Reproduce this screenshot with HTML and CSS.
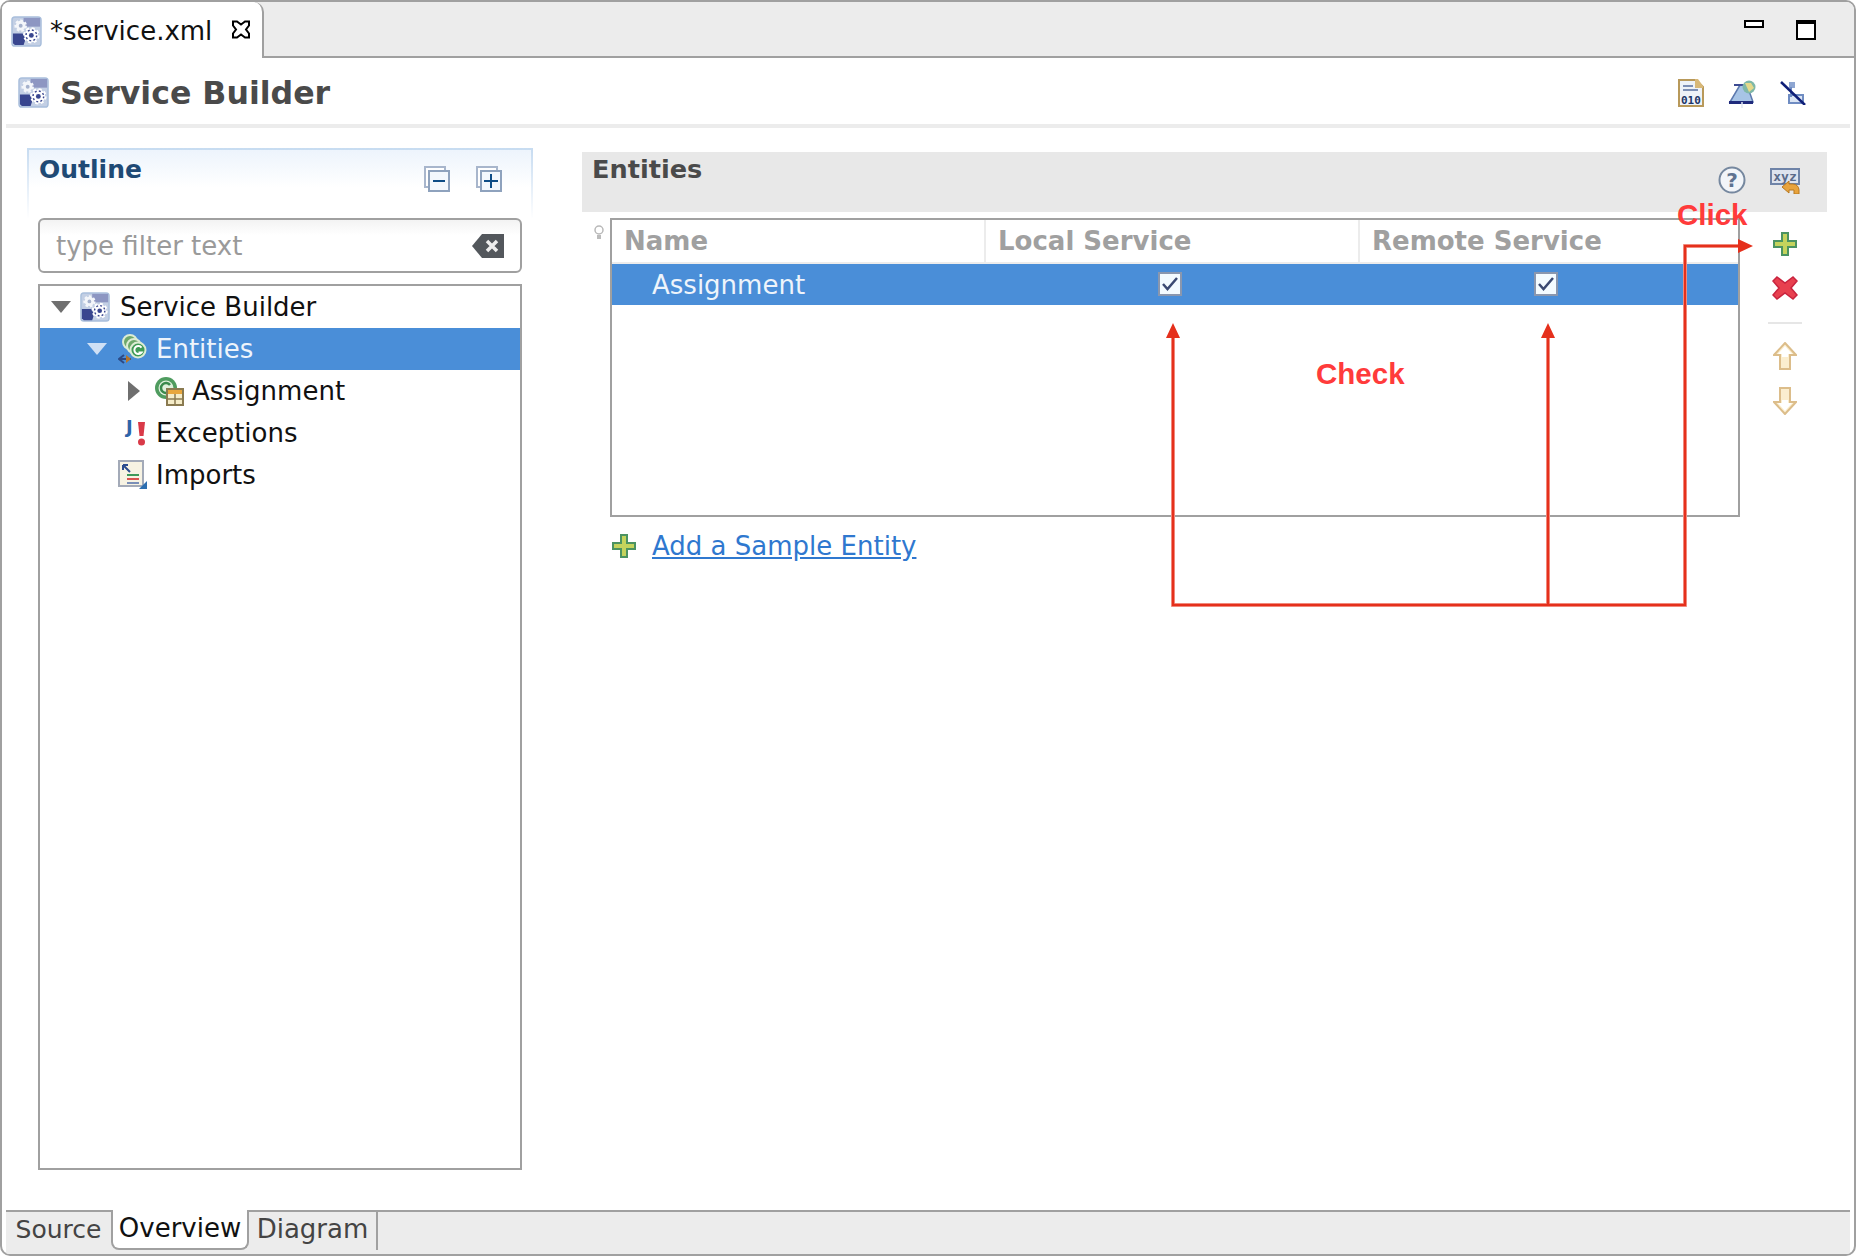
FILE: index.html
```html
<!DOCTYPE html>
<html lang="en">

<head>
    <meta charset="UTF-8">
    <title>service.xml</title>
    <link rel="stylesheet" href="styles.css">
</head>

<body>
    <svg class="defs" width="0" height="0">
        <defs>
            <symbol id="gears" viewBox="0 0 32 32">
                <rect x="1" y="1" width="30" height="30" rx="3" fill="#c3cfe4" stroke="#a9bfdc" stroke-width="1.500" />
                <rect x="13" y="2" width="17" height="9" fill="#8d96c2" />
                <path d="M2 18h10l3 6-2 6H4l-2-2z" fill="#39468f" />
                <circle cx="10" cy="10" r="5" fill="#f4f6fa" stroke="#f4f6fa" stroke-width="3" stroke-dasharray="2.500 2" />
                <circle cx="10" cy="10" r="2" fill="#a5b1cc" />
                <circle cx="21" cy="20" r="7" fill="#fff" stroke="#fff" stroke-width="3" stroke-dasharray="3 2.500" />
                <circle cx="21" cy="20" r="5.500" fill="none" stroke="#39468f" stroke-width="1.500" stroke-dasharray="2 2.300" />
                <circle cx="21" cy="20" r="2.500" fill="#39468f" />
            </symbol>
            <symbol id="plus" viewBox="0 0 24 24">
                <path d="M8 0h8v8h8v8h-8v8H8v-8H0V8h8z" fill="#4b9361" />
                <path d="M10 2h4v8h8v4h-8v8h-4v-8H2v-4h8z" fill="#c4d35c" />
            </symbol>
            <symbol id="arrow" viewBox="0 0 24 28">
                <path d="M12 1l11 12h-6v14H7V13H1z" fill="#fbeecf" stroke="#dcbd8a" stroke-width="2" />
                <path d="M12 4l7 8h-4v3H9v-3H5z" fill="#fff" />
            </symbol>
            <symbol id="check" viewBox="0 0 24 24">
                <rect x="1" y="1" width="22" height="22" fill="#f3fbff" stroke="#8a97ae" stroke-width="2" />
                <path d="M5 12l4.500 5L19 6" fill="none" stroke="#3b4a72" stroke-width="2.500" />
            </symbol>
        </defs>
    </svg>

    <div class="window">
        <div class="tabbar">
            <div class="tab">
                <svg class="icon-31"><use href="#gears" /></svg>
                <span>*service.xml</span>
                <svg class="tab-close" viewBox="0 0 20 20">
                    <path d="M2 2h4l4 3 4-3h4v4l-3 4 3 4v4h-4l-4-3-4 3H2v-4l3-4-3-4z" fill="#fff" stroke="#000" stroke-width="2" />
                </svg>
            </div>
            <div class="win-btns">
                <span class="btn-min"></span>
                <span class="btn-max"></span>
            </div>
        </div>

        <div class="form-head">
            <svg class="icon-31"><use href="#gears" /></svg>
            <h1>Service Builder</h1>
            <div class="head-tools">
                <svg class="tool-bin" viewBox="0 0 26 28">
                    <path d="M1 1h17l7 7v19H1z" fill="#eef2f8" stroke="#b8995a" stroke-width="2" />
                    <path d="M17 0h3l5 7v2h-8z" fill="#d8b878" />
                    <path d="M5 7h10M5 11h15" stroke="#7d8fb5" stroke-width="2" />
                    <text x="3" y="25" class="bin-text">010</text>
                </svg>
                <svg class="tool-deploy" viewBox="0 0 28 30">
                    <path d="M2 24L12 7h7l6 17z" fill="#a7c4e6" stroke="#5c79ae" stroke-width="1.500" />
                    <rect x="1" y="23" width="24" height="3" fill="#1f2a7c" />
                    <path d="M6 7h14" stroke="#3c4a92" stroke-width="2" />
                    <circle cx="21" cy="9" r="6.500" fill="#7fb8a8" />
                    <path d="M17 5l6 0 3 5-5 4z" fill="#e5d98a" />
                    <path d="M14 24v6" stroke="#dfe6f2" stroke-width="1.500" />
                </svg>
                <svg class="tool-nolink" viewBox="0 0 26 24">
                    <rect x="9" y="1" width="6" height="6" fill="#8ea6d2" />
                    <rect x="9" y="14" width="14" height="8" fill="#dbe5f4" stroke="#6f8cc2" stroke-width="2" />
                    <path d="M11 6v10" stroke="#6f8cc2" stroke-width="2" />
                    <path d="M1 1l24 23" stroke="#0f1f78" stroke-width="2.500" />
                </svg>
            </div>
        </div>

        <div class="form-body">
            <section class="outline">
                <div class="outline-head">
                    <h2>Outline</h2>
                    <svg class="tool-tree" viewBox="0 0 26 26">
                        <rect x="1" y="1" width="20" height="20" fill="#fff" stroke="#a8b6cc" stroke-width="2" />
                        <rect x="5" y="5" width="20" height="20" fill="#f3f8fd" stroke="#8ea2bd" stroke-width="2" />
                        <path d="M9 15h12" stroke="#0e4d86" stroke-width="2" />
                    </svg>
                    <svg class="tool-tree" viewBox="0 0 26 26">
                        <rect x="1" y="1" width="20" height="20" fill="#fff" stroke="#a8b6cc" stroke-width="2" />
                        <rect x="5" y="5" width="20" height="20" fill="#f3f8fd" stroke="#8ea2bd" stroke-width="2" />
                        <path d="M8 15h14M15 8v14" stroke="#0e4d86" stroke-width="2" />
                    </svg>
                </div>
                <div class="filter">
                    <span>type filter text</span>
                    <svg class="filter-clear" viewBox="0 0 32 24">
                        <path d="M10 0h22v24H10L0 12z" fill="#53575c" />
                        <path d="M15 7l10 10M25 7L15 17" stroke="#eee" stroke-width="3.500" />
                    </svg>
                </div>
                <ul class="tree">
                    <li class="node">
                        <span class="exp exp-open"></span>
                        <svg class="icon-30"><use href="#gears" /></svg>
                        <span>Service Builder</span>
                    </li>
                    <li class="node node-sel lvl-1">
                        <span class="exp exp-open"></span>
                        <svg class="icon-30" viewBox="0 0 30 30">
                            <circle cx="12" cy="8" r="7" fill="#6ea86c" stroke="#dcecd4" stroke-width="2" />
                            <circle cx="16" cy="12" r="7" fill="#6ea86c" stroke="#dcecd4" stroke-width="2" />
                            <circle cx="20" cy="16" r="7.500" fill="#3f9a55" stroke="#dcecd4" stroke-width="2" />
                            <path d="M23.500 13.500a4 4 0 1 0 0 5h-3" fill="none" stroke="#fff" stroke-width="2" />
                            <path d="M1 25h12" stroke="#2c4a86" stroke-width="2" />
                            <path d="M8 21l5 4-5 4z" fill="#b5752a" />
                            <path d="M6 21l-5 4 5 4" fill="none" stroke="#2c4a86" stroke-width="2" />
                        </svg>
                        <span>Entities</span>
                    </li>
                    <li class="node lvl-2">
                        <span class="exp exp-closed"></span>
                        <svg class="icon-30" viewBox="0 0 30 30">
                            <circle cx="12" cy="12" r="11" fill="#4f9c5f" />
                            <circle cx="12" cy="12" r="7.500" fill="#dff0dc" />
                            <path d="M16 9a5 5 0 1 0 0 6h-4" fill="none" stroke="#3a8a4c" stroke-width="2.500" />
                            <rect x="13" y="13" width="16" height="16" fill="#f5ecc8" stroke="#8a7a50" stroke-width="2" />
                            <rect x="14" y="14" width="14" height="4" fill="#e8a63c" />
                            <path d="M21 18v10M14 23h14" stroke="#8a7a50" stroke-width="1.500" />
                        </svg>
                        <span>Assignment</span>
                    </li>
                    <li class="node lvl-3">
                        <svg class="icon-exc" viewBox="0 -4 26 32">
                            <text x="4" y="14" class="j-text">J</text>
                            <path d="M16 3h7l-1.500 14h-4z" fill="#d93a48" />
                            <circle cx="19.500" cy="23" r="3.500" fill="#d93a48" />
                        </svg>
                        <span>Exceptions</span>
                    </li>
                    <li class="node lvl-3">
                        <svg class="icon-30" viewBox="0 0 30 30">
                            <rect x="1" y="1" width="24" height="25" fill="#f7f3e3" stroke="#a3aab8" stroke-width="2" />
                            <path d="M5 5l7 7M5 5h5M5 5v5" fill="none" stroke="#2d4d8f" stroke-width="2" />
                            <path d="M9 15h12" stroke="#3e9a5a" stroke-width="2" />
                            <path d="M9 19h12" stroke="#d9534f" stroke-width="2" />
                            <path d="M9 23h12" stroke="#7a8fb8" stroke-width="2" />
                            <path d="M29 21v8h-8z" fill="#2d6fb0" />
                        </svg>
                        <span>Imports</span>
                    </li>
                </ul>
            </section>

            <section class="entities">
                <div class="entities-head">
                    <h2>Entities</h2>
                    <svg class="tool-help" viewBox="0 0 28 28">
                        <circle cx="14" cy="14" r="12.500" fill="#f2f5f9" stroke="#76889f" stroke-width="2" />
                        <text x="14" y="21" class="help-text">?</text>
                    </svg>
                    <svg class="tool-xyz" viewBox="0 0 30 26">
                        <rect x="1" y="1" width="28" height="15" fill="#dde3ee" stroke="#6f84a8" stroke-width="2" />
                        <text x="15" y="13" class="xyz-text">xyz</text>
                        <path d="M12 19l7-6v3h4a6 6 0 0 1 6 6v4h-5v-4h-5v3z" fill="#e8a33c" stroke="#b9781e" />
                    </svg>
                </div>
                <div class="entities-main">
                    <svg class="bulb" viewBox="0 0 10 15">
                        <circle cx="5" cy="5" r="4" fill="#fff" stroke="#b8b8b8" stroke-width="1.500" />
                        <path d="M3 10h4v4H3z" fill="#bbb" />
                    </svg>
                    <div class="table-box">
                        <table class="grid">
                            <thead>
                                <tr>
                                    <th>Name</th>
                                    <th>Local Service</th>
                                    <th>Remote Service</th>
                                </tr>
                            </thead>
                            <tbody>
                                <tr class="row-sel">
                                    <td class="cell-name">Assignment</td>
                                    <td class="cell-check"><svg class="check"><use href="#check" /></svg></td>
                                    <td class="cell-check cell-last"><svg class="check"><use href="#check" /></svg></td>
                                </tr>
                            </tbody>
                        </table>
                    </div>
                    <div class="side-tools">
                        <svg class="side-plus"><use href="#plus" /></svg>
                        <svg class="side-del" viewBox="0 0 26 24">
                            <path d="M5 1l8 6 8-6 4 4-6 7 6 7-4 4-8-6-8 6-4-4 6-7-6-7z" fill="#e8404f" stroke="#c9233e" stroke-width="1.500" />
                        </svg>
                        <div class="side-sep"></div>
                        <svg class="side-arrow"><use href="#arrow" /></svg>
                        <svg class="side-arrow side-down"><use href="#arrow" /></svg>
                    </div>
                </div>
                <div class="add-link">
                    <svg class="add-plus"><use href="#plus" /></svg>
                    <a href="#">Add a Sample Entity</a>
                </div>
            </section>
        </div>

        <div class="page-tabs">
            <div class="page-tab page-tab-source">Source</div>
            <div class="page-tab page-tab-on">Overview</div>
            <div class="page-tab page-tab-last">Diagram</div>
        </div>

        <!-- red notes drawn on top of the screenshot -->
        <svg class="notes" width="1856" height="1256" viewBox="0 0 1856 1256">
            <path class="note-halo" d="M1173 335V605H1685V246H1740M1548 335V605" />
            <path class="note-line" d="M1173 335V605H1685V246H1740M1548 335V605" />
            <path class="note-head" d="M1173 323l7 15h-14z" />
            <path class="note-head" d="M1548 323l7 15h-14z" />
            <path class="note-head" d="M1753 246l-15-7v14z" />
            <text x="1677" y="225" class="note-text">Click</text>
            <text x="1316" y="384" class="note-text">Check</text>
        </svg>
    </div>
</body>

</html>
```

FILE: styles.css
```css
* {
    box-sizing: border-box;
    margin: 0;
    padding: 0;
}

body {
    font-family: "DejaVu Sans", sans-serif;
    font-size: 26px;
    color: #111;
    background-color: #fff;
}

.defs {
    position: absolute;
}

svg {
    display: block;
    flex: none;
}

.window {
    position: relative;
    display: flex;
    flex-direction: column;
    width: 1856px;
    height: 1256px;
    overflow: hidden;
    border: 2px solid #a0a0a0;
    border-radius: 10px;
    background-color: #fff;
}

.icon-31 {
    width: 31px;
    height: 31px;
}

.icon-30 {
    width: 30px;
    height: 30px;
}

/* top tab */
.tabbar {
    display: flex;
    justify-content: space-between;
    height: 56px;
    background-color: #ececec;
    border-bottom: 2px solid #a0a0a0;
}

.tab {
    display: flex;
    align-items: center;
    width: 262px;
    height: 56px;
    padding: 2px 0 0 9px;
    gap: 8px;
    background-color: #fff;
    border-right: 2px solid #a0a0a0;
    border-top-right-radius: 10px;
    line-height: 1;
}

.tab-close {
    width: 20px;
    height: 21px;
    margin: -4px 0 0 11px;
}

.win-btns {
    display: flex;
    align-items: flex-start;
    gap: 32px;
    padding: 18px 38px 0 0;
}

.btn-min {
    width: 20px;
    height: 8px;
    border: 2px solid #000;
    background-color: #fff;
}

.btn-max {
    width: 20px;
    height: 20px;
    border: 2px solid #000;
    border-top-width: 4px;
    background-color: #fff;
}

/* form header */
.form-head {
    display: flex;
    align-items: center;
    gap: 11px;
    height: 70px;
    margin: 0 4px;
    padding: 3px 0 0 12px;
    border-bottom: 4px solid #ececec;
}

.form-head h1 {
    font-size: 31.600px;
    font-weight: bold;
    color: #4a4a4a;
}

.head-tools {
    display: flex;
    align-items: center;
    margin-left: auto;
    padding-right: 44px;
    gap: 24px;
}

.tool-bin {
    width: 26px;
    height: 28px;
}

.tool-deploy {
    width: 28px;
    height: 30px;
}

.tool-nolink {
    width: 26px;
    height: 24px;
}

.bin-text {
    font-family: "DejaVu Sans Mono", monospace;
    font-size: 11px;
    font-weight: bold;
    fill: #1c3566;
}

/* body */
.form-body {
    display: flex;
    flex: 1;
    min-height: 0;
    padding: 20px 0 0 25px;
    gap: 49px;
}

.outline {
    width: 506px;
}

.outline-head {
    display: flex;
    align-items: flex-start;
    height: 70px;
    padding: 5px 29px 0 10px;
    border: 2px solid #c7dcf1;
    border-bottom: 0;
    border-image: linear-gradient(#c7dcf1, #eef4fb 70%, #fff) 1;
    background: linear-gradient(#edf4fc, #fff 55%);
}

.outline-head h2 {
    font-size: 25px;
    font-weight: bold;
    line-height: 30px;
    color: #1f4a75;
    margin-right: auto;
}

.tool-tree {
    width: 26px;
    height: 26px;
    margin: 11px 0 0 26px;
}

.filter {
    display: flex;
    align-items: center;
    justify-content: space-between;
    width: 484px;
    height: 55px;
    margin-left: 11px;
    padding: 0 16px 0 16px;
    border: 2px solid #a0a0a0;
    border-radius: 6px;
    color: #9a9a9a;
    background: linear-gradient(#f3f3f3, #fff 30%);
}

.filter-clear {
    width: 32px;
    height: 24px;
}

.tree {
    list-style: none;
    width: 484px;
    height: 886px;
    margin: 11px 0 0 11px;
    border: 2px solid #a0a0a0;
}

.node {
    display: flex;
    align-items: center;
    height: 42px;
    padding-left: 11px;
}

.node-sel {
    color: #eef4fb;
    background-color: #4a8ed8;
}

.exp {
    width: 0;
    height: 0;
    flex: none;
    margin-right: 9px;
}

.exp-open {
    border-left: 10px solid transparent;
    border-right: 10px solid transparent;
    border-top: 12px solid #6f6f6f;
}

.node-sel .exp-open {
    border-top-color: #cfe0f5;
    margin-right: 11px;
}

.exp-closed {
    margin-right: 14px;
    border-top: 10px solid transparent;
    border-bottom: 10px solid transparent;
    border-left: 12px solid #6f6f6f;
}

.node > span:last-child {
    margin-left: 10px;
}

.node-sel > span:last-child {
    margin-left: 8px;
}

.lvl-1 {
    padding-left: 47px;
}

.lvl-2 {
    padding-left: 88px;
}

.lvl-2 > span:last-child,
.lvl-3 > span:last-child {
    margin-left: 8px;
}

.lvl-3 {
    padding-left: 78px;
}

.icon-exc {
    width: 26px;
    height: 32px;
    margin: 0 0 4px 4px;
}

.j-text {
    font-family: "DejaVu Sans", sans-serif;
    font-size: 18px;
    font-weight: bold;
    fill: #2f64a8;
}

/* entities */
.entities {
    width: 1245px;
    margin-top: 4px;
}

.entities-head {
    display: flex;
    align-items: flex-start;
    height: 60px;
    padding: 2px 27px 0 10px;
    background-color: #e8e8e8;
}

.entities-head h2 {
    font-size: 25.600px;
    font-weight: bold;
    line-height: 30px;
    color: #4a4a4a;
    margin-right: auto;
}

.tool-help {
    width: 28px;
    height: 28px;
    margin-top: 12px;
}

.help-text {
    font-size: 20px;
    font-weight: bold;
    text-anchor: middle;
    fill: #5f7391;
}

.tool-xyz {
    width: 30px;
    height: 26px;
    margin: 14px 0 0 24px;
}

.xyz-text {
    font-family: "DejaVu Sans Mono", monospace;
    font-size: 13px;
    font-weight: bold;
    text-anchor: middle;
    fill: #5a6b8a;
}

.entities-main {
    display: flex;
    align-items: flex-start;
    margin-top: 6px;
    padding-left: 12px;
}

.bulb {
    width: 10px;
    height: 15px;
    margin: 7px 6px 0 0;
}

.table-box {
    width: 1130px;
    height: 299px;
    border: 2px solid #a0a0a0;
}

.grid {
    width: 1126px;
    table-layout: fixed;
    border-collapse: collapse;
}

.grid th {
    height: 43px;
    padding-left: 12px;
    text-align: left;
    font-weight: bold;
    color: #a0a0a0;
    border-right: 2px solid #ececec;
    border-bottom: 2px solid #ececec;
}

.grid th:first-child {
    width: 373px;
}

.grid th:nth-child(2) {
    width: 374px;
}

.grid th:last-child {
    border-right: 0;
}

.row-sel {
    height: 42px;
    color: #eef4fb;
    background-color: #4a8ed8;
}

.cell-name {
    padding-left: 40px;
}

.cell-check {
    padding-right: 4px;
}

.cell-last {
    padding-right: 6px;
}

.check {
    width: 24px;
    height: 24px;
    margin: 0 auto 1px;
}

.side-tools {
    display: flex;
    flex-direction: column;
    align-items: center;
    width: 34px;
    margin-left: 28px;
    padding-top: 14px;
}

.side-plus {
    width: 24px;
    height: 24px;
}

.side-del {
    width: 26px;
    height: 24px;
    margin-top: 20px;
}

.side-sep {
    width: 34px;
    height: 2px;
    margin-top: 22px;
    background-color: #e6e6e6;
}

.side-arrow {
    width: 24px;
    height: 28px;
    margin-top: 18px;
}

.side-down {
    margin-top: 17px;
    transform: rotate(180deg);
}

.add-link {
    display: flex;
    align-items: center;
    gap: 16px;
    margin: 14px 0 0 30px;
}

.add-plus {
    width: 24px;
    height: 24px;
}

.add-link a {
    color: #2f78cf;
}

/* bottom tabs */
.page-tabs {
    display: flex;
    height: 44px;
    margin: 0 4px;
    background-color: #ececec;
    border-top: 2px solid #a0a0a0;
    color: #444;
}

.page-tab {
    display: flex;
    align-items: center;
    justify-content: center;
    height: 38px;
    padding-bottom: 4px;
}

.page-tab-source {
    width: 105px;
    font-size: 25px;
}

.page-tab-on {
    width: 138px;
    height: 40px;
    margin-top: -2px;
    padding-bottom: 2px;
    color: #111;
    background-color: #fff;
    border: 2px solid #a0a0a0;
    border-top: 0;
    border-radius: 0 0 8px 8px;
}

.page-tab-last {
    width: 129px;
    border-right: 2px solid #a0a0a0;
}

/* annotations */
.notes {
    position: absolute;
    left: -2px;
    top: -2px;
}

.note-line {
    fill: none;
    stroke: #e5301c;
    stroke-width: 2.500px;
}

.note-halo {
    fill: none;
    stroke: #f4a79d;
    stroke-width: 4px;
}

.note-head {
    fill: #e5301c;
}

.note-text {
    font-family: "Liberation Sans", sans-serif;
    font-size: 29.500px;
    font-weight: bold;
    fill: #ff3b3b;
}
```
